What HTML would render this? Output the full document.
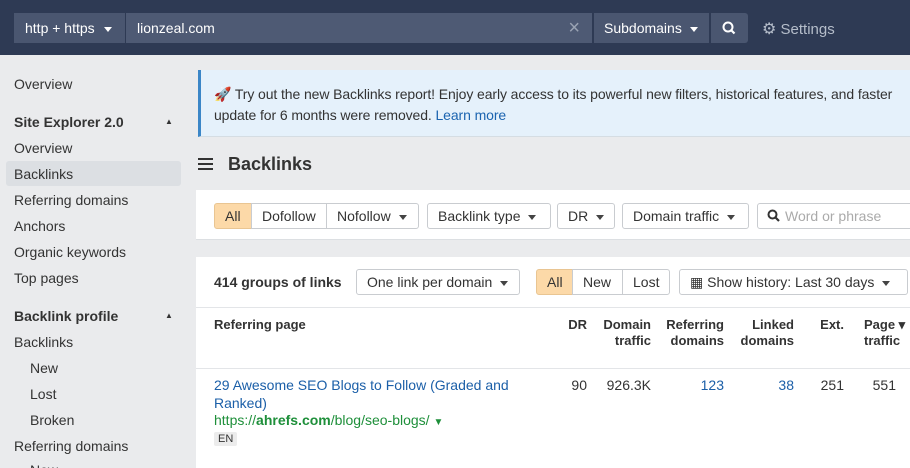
<!DOCTYPE html>
<html><head><meta charset="utf-8"><style>
*{box-sizing:border-box;margin:0;padding:0}
html,body{width:910px;height:468px;overflow:hidden}
body{background:#eaebed;font-family:"Liberation Sans",Arial,sans-serif;font-size:14px;color:#333;position:relative}
.a{position:absolute;white-space:nowrap}
.top{left:0;top:0;width:910px;height:55px;background:#2e3a54}
.tb{top:13px;height:30px;background:#4a5670;color:#fff;font-size:14px;line-height:30px}
.side div{position:absolute;left:14px;white-space:nowrap}
.btn{position:absolute;height:26px;border:1px solid #c9ccd0;border-radius:3px;background:#fff;line-height:24px;padding:0 10px;white-space:nowrap;color:#333}
.car{display:inline-block;width:0;height:0;border-left:4px solid transparent;border-right:4px solid transparent;border-top:5px solid #444;vertical-align:middle;margin-left:8px}
.th{position:absolute;font-weight:bold;font-size:13px;line-height:16px;text-align:right;color:#333}
.td{position:absolute;top:377px;text-align:right}
</style></head><body>
<div class="a top"></div>
<div class="a tb" style="left:14px;width:111px;padding-left:11px">http + https<span class="car" style="border-top-color:#fff;margin-left:9px"></span></div>
<div class="a tb" style="left:126px;width:466px;padding-left:11px;background:#4e5a74">lionzeal.com<span style="position:absolute;right:12px;top:0;color:#9aa3b3;font-size:20px">×</span></div>
<div class="a tb" style="left:594px;width:115px;padding-left:10px">Subdomains<span class="car" style="border-top-color:#fff"></span></div>
<div class="a tb" style="left:711px;width:37px;border-radius:0 3px 3px 0"><svg width="37" height="30"><circle cx="17" cy="14" r="4.5" fill="none" stroke="#fff" stroke-width="2"/><line x1="20" y1="17" x2="23.5" y2="20.5" stroke="#fff" stroke-width="2.2"/></svg></div>
<div class="a" style="left:762px;top:19px;color:#b5bdca;font-size:15px"><span style="font-size:16px">⚙</span> Settings</div>

<div class="side">
<div style="top:76px">Overview</div>
<div style="top:114px;font-weight:bold">Site Explorer 2.0</div>
<div style="left:165px;top:117px;font-size:8px">▲</div>
<div style="top:140px">Overview</div>
<div style="left:6px;top:161px;width:175px;height:25px;background:#dcdfe3;border-radius:3px"></div>
<div style="top:166px">Backlinks</div>
<div style="top:192px">Referring domains</div>
<div style="top:218px">Anchors</div>
<div style="top:244px">Organic keywords</div>
<div style="top:270px">Top pages</div>
<div style="top:308px;font-weight:bold">Backlink profile</div>
<div style="left:165px;top:311px;font-size:8px">▲</div>
<div style="top:334px">Backlinks</div>
<div style="left:30px;top:360px">New</div>
<div style="left:30px;top:386px">Lost</div>
<div style="left:30px;top:412px">Broken</div>
<div style="top:438px">Referring domains</div>
<div style="left:30px;top:462px">New</div>
</div>

<div class="a" style="left:198px;top:70px;width:712px;height:67px;background:#e5f1fb;border-left:3px solid #3b86c7;border-bottom:1px solid #d5dde3"></div>
<div class="a" style="left:214px;top:84px;font-size:14px;line-height:21px;letter-spacing:-0.1px">🚀 Try out the new Backlinks report! Enjoy early access to its powerful new filters, historical features, and faster<br>update for 6 months were removed. <span style="color:#1b64b0">Learn more</span></div>

<svg class="a" style="left:198px;top:157px" width="16" height="14"><rect x="0" y="1" width="15" height="2" fill="#333"/><rect x="0" y="6" width="15" height="2" fill="#333"/><rect x="0" y="11" width="15" height="2" fill="#333"/></svg>
<div class="a" style="left:228px;top:154px;font-size:18px;font-weight:bold;color:#333">Backlinks</div>

<div class="a" style="left:196px;top:190px;width:714px;height:50px;background:#fff;border-bottom:1px solid #dcdfe2"></div>
<div class="btn" style="left:214px;top:203px;width:38px;background:#fcd9a8;border-color:#e9c592;border-radius:3px 0 0 3px">All</div>
<div class="btn" style="left:251px;top:203px;width:76px;border-radius:0">Dofollow</div>
<div class="btn" style="left:326px;top:203px;width:93px;border-radius:0 3px 3px 0">Nofollow<span class="car"></span></div>
<div class="btn" style="left:427px;top:203px;width:124px">Backlink type<span class="car"></span></div>
<div class="btn" style="left:557px;top:203px;width:58px">DR<span class="car"></span></div>
<div class="btn" style="left:622px;top:203px;width:127px">Domain traffic<span class="car"></span></div>
<div class="btn" style="left:757px;top:203px;width:160px;color:#aaa;padding-left:9px"><svg width="14" height="14" style="vertical-align:-2px;margin-right:4px"><circle cx="5.5" cy="5.5" r="4" fill="none" stroke="#333" stroke-width="2"/><line x1="8.5" y1="8.5" x2="12" y2="12" stroke="#333" stroke-width="2.2"/></svg>Word or phrase</div>

<div class="a" style="left:196px;top:257px;width:714px;height:211px;background:#fff"></div>
<div class="a" style="left:214px;top:274px;font-weight:bold">414 groups of links</div>
<div class="btn" style="left:356px;top:269px;width:164px">One link per domain<span class="car"></span></div>
<div class="btn" style="left:536px;top:269px;width:37px;background:#fcd9a8;border-color:#e9c592;border-radius:3px 0 0 3px">All</div>
<div class="btn" style="left:572px;top:269px;width:51px;border-radius:0">New</div>
<div class="btn" style="left:622px;top:269px;width:48px;border-radius:0 3px 3px 0">Lost</div>
<div class="btn" style="left:679px;top:269px;width:229px">▦ Show history: Last 30 days<span class="car"></span></div>
<div class="a" style="left:196px;top:307px;width:714px;height:1px;background:#e3e5e8"></div>
<div class="th" style="left:214px;top:317px">Referring page</div>
<div class="th" style="left:555px;top:317px;width:32px">DR</div>
<div class="th" style="left:590px;top:317px;width:61px">Domain<br>traffic</div>
<div class="th" style="left:660px;top:317px;width:64px">Referring<br>domains</div>
<div class="th" style="left:730px;top:317px;width:64px">Linked<br>domains</div>
<div class="th" style="left:810px;top:317px;width:34px">Ext.</div>
<div class="th" style="left:864px;top:317px;width:54px;text-align:left">Page ▾<br>traffic</div>
<div class="a" style="left:196px;top:368px;width:714px;height:1px;background:#e3e5e8"></div>
<div class="a" style="left:214px;top:376px;color:#1b5fa8;line-height:18px;white-space:normal;width:310px">29 Awesome SEO Blogs to Follow (Graded and Ranked)</div>
<div class="a" style="left:214px;top:412px;color:#1e8f3a">https://<b>ahrefs.com</b>/blog/seo-blogs/ <span style="font-size:10px">▼</span></div>
<div class="a" style="left:214px;top:432px;font-size:11px;background:#ececec;padding:1px 4px;border-radius:2px">EN</div>
<div class="td" style="left:555px;width:32px">90</div>
<div class="td" style="left:590px;width:61px">926.3K</div>
<div class="td" style="left:660px;width:64px;color:#1b5fa8">123</div>
<div class="td" style="left:730px;width:64px;color:#1b5fa8">38</div>
<div class="td" style="left:810px;width:34px">251</div>
<div class="td" style="left:856px;width:40px">551</div>
</body></html>
